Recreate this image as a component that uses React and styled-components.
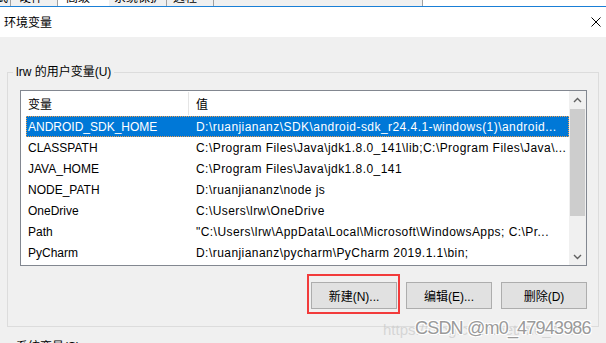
import React from "react";
import styled, { createGlobalStyle } from "styled-components";

const Global = createGlobalStyle`
  html, body { margin: 0; padding: 0; background: #f0f0f0; }
  body { font-family: "Liberation Sans", "Noto Sans CJK SC", sans-serif; font-size: 12px; color: #000; }
`;

const FONT = `"Liberation Sans", "Noto Sans CJK SC", sans-serif`;

const Root = styled.div`
  position: relative;
  width: 606px;
  height: 343px;
  overflow: hidden;
  background: #f0f0f0;
  font-family: ${FONT};
`;

const TabStrip = styled.div`
  display: flex;
  height: 6px;
  overflow: hidden;
  background: #f0f0f0;
`;

const Tab = styled.div`
  flex: none;
  width: ${(p) => p.$w}px;
  height: 6px;
  box-sizing: border-box;
  border-right: 1px solid ${(p) => (p.$sep ? "#a0a0a0" : "transparent")};
  background: ${(p) => (p.$active ? "#ffffff" : "#f0f0f0")};
  padding-left: ${(p) => p.$pl}px;
  font-size: 12px;
  line-height: 16px;
  white-space: nowrap;
  overflow: hidden;
`;

const TabLabel = styled.div`
  margin-top: -10px;
  margin-left: ${(p) => p.$ml || 0}px;
`;

const TabFill = styled.div`
  height: 6px;
  background: ${(p) => (p.$white ? "#ffffff" : "#f0f0f0")};
  border-right: ${(p) => (p.$sep ? "1px solid #a0a0a0" : "none")};
  flex-basis: ${(p) => (p.$w ? `${p.$w}px` : "auto")};
  flex-grow: ${(p) => (p.$w ? 0 : 1)};
  flex-shrink: 0;
`;

const Window = styled.div`
  border-top: 1px solid #1a7fd6;
`;

const TitleBar = styled.div`
  display: flex;
  align-items: center;
  justify-content: space-between;
  height: 30px;
  background: #ffffff;
  padding: 0 5px 0 4px;
`;

const Title = styled.span`
  font-size: 12px;
  line-height: 14px;
  margin-top: 1px;
`;

const CloseBtn = styled.div`
  width: 10px;
  height: 10px;
  display: flex;
`;

const Body = styled.div`
  padding: 28px 7px 0 7px;
`;

const Group = styled.fieldset`
  margin: ${(p) => (p.$mt ? `${p.$mt}px` : "0")} 0 0 0;
  padding: 11px 11px 17px 5px;
  border: 1px solid #dcdcdc;
  min-width: 0;
`;

const Legend = styled.legend`
  padding: 0 3px;
  font-size: 12px;
  line-height: 14px;
`;

const ListBox = styled.div`
  margin-left: 7px;
  height: 176px;
  box-sizing: border-box;
  border: 1px solid #828790;
  background: #ffffff;
  display: flex;
  overflow: hidden;
`;

const ListMain = styled.div`
  flex: 1;
  min-width: 0;
`;

const HeaderRow = styled.div`
  display: grid;
  grid-template-columns: 168px 1fr;
  height: 25px;
`;

const HeaderCell = styled.div`
  display: flex;
  align-items: center;
  padding-left: 7px;
  border-right: ${(p) => (p.$sep ? "1px solid #e5e5e5" : "none")};
  font-size: 12px;
  margin: 1px 0;
`;

const Row = styled.div`
  display: grid;
  grid-template-columns: 163px 1fr;
  height: 21px;
  margin-left: 5px;
  box-sizing: border-box;
  align-items: center;
  background: ${(p) => (p.$sel ? "#0078d7" : "transparent")};
  color: ${(p) => (p.$sel ? "#ffffff" : "#000000")};
  outline: ${(p) => (p.$sel ? "1px dotted #f0a050" : "none")};
  outline-offset: -1px;
`;

const Cell = styled.div`
  padding-left: ${(p) => p.$pl}px;
  font-size: 12px;
  letter-spacing: ${(p) => p.$ls || 0}px;
  white-space: nowrap;
  overflow: hidden;
`;

const ScrollBar = styled.div`
  width: 17px;
  flex: none;
  background: #f0f0f0;
  display: flex;
  flex-direction: column;
`;

const ScrollArrow = styled.div`
  height: 17px;
  display: flex;
  align-items: center;
  justify-content: center;
  flex: none;
`;

const ScrollTrack = styled.div`
  flex: 1;
  display: flex;
  flex-direction: column;
  padding: 1px 1px 0 1px;
`;

const Thumb = styled.div`
  height: 107px;
  background: #cdcdcd;
`;

const ButtonRow = styled.div`
  display: flex;
  justify-content: flex-end;
  gap: 9px;
  margin-top: 16px;
`;

const Button = styled.div`
  position: relative;
  width: 86px;
  height: 27px;
  box-sizing: border-box;
  border: 1px solid #adadad;
  background: #e1e1e1;
  display: flex;
  align-items: center;
  justify-content: center;
  font-size: 12px;

  &::after {
    content: "";
    display: ${(p) => (p.$marked ? "block" : "none")};
    position: absolute;
    top: -9px;
    left: -5px;
    right: -4px;
    bottom: -6px;
    border: 2px solid #f23b3b;
  }
`;

const Watermark = styled.div`
  position: absolute;
  left: 383px;
  top: 318px;
  white-space: nowrap;
  font-family: ${FONT};
  pointer-events: none;
`;

const WmUrl = styled.span`
  position: absolute;
  left: 0;
  top: 3px;
  width: 200px;
  overflow: hidden;
  font-size: 15px;
  color: rgba(195, 195, 195, 0.6);
`;

const WmMain = styled.span`
  position: relative;
  margin-left: 32px;
  font-size: 18px;
  letter-spacing: -0.8px;
  color: #9a9a9a;
  text-shadow: 1px 1px 0 #fff, -1px -1px 0 #fff, 1px -1px 0 #fff, -1px 1px 0 #fff;
`;

const rows = [
  ["ANDROID_SDK_HOME", "D:\\ruanjiananz\\SDK\\android-sdk_r24.4.1-windows(1)\\android..."],
  ["CLASSPATH", "C:\\Program Files\\Java\\jdk1.8.0_141\\lib;C:\\Program Files\\Java\\..."],
  ["JAVA_HOME", "C:\\Program Files\\Java\\jdk1.8.0_141"],
  ["NODE_PATH", "D:\\ruanjiananz\\node js"],
  ["OneDrive", "C:\\Users\\lrw\\OneDrive"],
  ["Path", "\"C:\\Users\\lrw\\AppData\\Local\\Microsoft\\WindowsApps; C:\\Pr..."],
  ["PyCharm", "D:\\ruanjiananz\\pycharm\\PyCharm 2019.1.1\\bin;"],
];

const Chevron = ({ up }) => (
  <svg width="9" height="6" viewBox="0 0 9 6">
    <path
      d={up ? "M1 5 L4.5 1.5 L8 5" : "M1 1 L4.5 4.5 L8 1"}
      fill="none"
      stroke="#606060"
      strokeWidth="1.4"
    />
  </svg>
);

export default function App() {
  return (
    <Root>
      <Global />
      <TabStrip>
        <Tab $w={11} $pl={0} $sep>
          <TabLabel $ml={-4}>式</TabLabel>
        </Tab>
        <Tab $w={47} $pl={8} $sep>
          <TabLabel>硬件</TabLabel>
        </Tab>
        <Tab $w={51} $pl={8} $active>
          <TabLabel>高级</TabLabel>
        </Tab>
        <Tab $w={58} $pl={5} $sep>
          <TabLabel>系统保护</TabLabel>
        </Tab>
        <Tab $w={47} $pl={6} $sep>
          <TabLabel>远程</TabLabel>
        </Tab>
        <TabFill $w={208} $sep />
        <TabFill $white />
      </TabStrip>
      <Window>
        <TitleBar>
          <Title>环境变量</Title>
          <CloseBtn>
            <svg width="10" height="10" viewBox="0 0 10 10">
              <path d="M0.5 0.5 L9.5 9.5 M9.5 0.5 L0.5 9.5" stroke="#000" strokeWidth="1" />
            </svg>
          </CloseBtn>
        </TitleBar>
        <Body>
          <Group>
            <Legend>lrw 的用户变量(U)</Legend>
            <ListBox>
              <ListMain>
                <HeaderRow>
                  <HeaderCell $sep>变量</HeaderCell>
                  <HeaderCell>值</HeaderCell>
                </HeaderRow>
                {rows.map(([k, v], i) => (
                  <Row key={k} $sel={i === 0}>
                    <Cell $pl={2}>{k}</Cell>
                    <Cell $pl={7} $ls={0.45}>{v}</Cell>
                  </Row>
                ))}
              </ListMain>
              <ScrollBar>
                <ScrollArrow>
                  <Chevron up />
                </ScrollArrow>
                <ScrollTrack>
                  <Thumb />
                </ScrollTrack>
                <ScrollArrow>
                  <Chevron />
                </ScrollArrow>
              </ScrollBar>
            </ListBox>
            <ButtonRow>
              <Button $marked>新建(N)...</Button>
              <Button>编辑(E)...</Button>
              <Button>删除(D)</Button>
            </ButtonRow>
          </Group>
          <Group $mt={13}>
            <Legend>系统变量(S)</Legend>
          </Group>
        </Body>
      </Window>
      <Watermark>
        <WmUrl>https://blog.csdn.net/m0_47943986</WmUrl>
        <WmMain>CSDN @m0_47943986</WmMain>
      </Watermark>
    </Root>
  );
}
